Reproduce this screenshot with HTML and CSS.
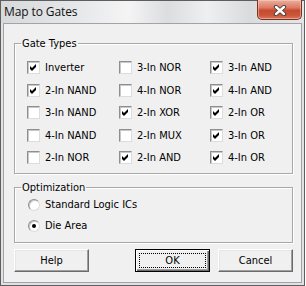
FILE: index.html
```html
<!DOCTYPE html>
<html>
<head>
<meta charset="utf-8">
<title>Map to Gates</title>
<link rel="stylesheet" href="styles.css">
</head>
<body>
<div class="window">
  <div class="titlebar">
    <span class="title">Map to Gates</span>
    <div class="close">
      <svg width="14" height="11" viewBox="0 0 14 11">
        <path d="M3 2 L11 9 M11 2 L3 9" stroke="#3c3c3c" stroke-width="4.2" stroke-linecap="round" fill="none"/>
        <path d="M3 2 L11 9 M11 2 L3 9" stroke="#fff" stroke-width="2.4" stroke-linecap="round" fill="none"/>
      </svg>
    </div>
  </div>
  <div class="client">
    <fieldset class="group">
      <legend>Gate Types</legend>
      <div class="gate-grid">
        <label class="item"><span class="box on"><svg viewBox="0 0 7 7"><path d="M0 2 L2 4 L6 0 L6 3 L2 7 L0 5 Z"/></svg></span>Inverter</label>
        <label class="item"><span class="box"></span>3-In NOR</label>
        <label class="item"><span class="box on"><svg viewBox="0 0 7 7"><path d="M0 2 L2 4 L6 0 L6 3 L2 7 L0 5 Z"/></svg></span>3-In AND</label>
        <label class="item"><span class="box on"><svg viewBox="0 0 7 7"><path d="M0 2 L2 4 L6 0 L6 3 L2 7 L0 5 Z"/></svg></span>2-In NAND</label>
        <label class="item"><span class="box"></span>4-In NOR</label>
        <label class="item"><span class="box on"><svg viewBox="0 0 7 7"><path d="M0 2 L2 4 L6 0 L6 3 L2 7 L0 5 Z"/></svg></span>4-In AND</label>
        <label class="item"><span class="box"></span>3-In NAND</label>
        <label class="item"><span class="box on"><svg viewBox="0 0 7 7"><path d="M0 2 L2 4 L6 0 L6 3 L2 7 L0 5 Z"/></svg></span>2-In XOR</label>
        <label class="item"><span class="box on"><svg viewBox="0 0 7 7"><path d="M0 2 L2 4 L6 0 L6 3 L2 7 L0 5 Z"/></svg></span>2-In OR</label>
        <label class="item"><span class="box"></span>4-In NAND</label>
        <label class="item"><span class="box"></span>2-In MUX</label>
        <label class="item"><span class="box on"><svg viewBox="0 0 7 7"><path d="M0 2 L2 4 L6 0 L6 3 L2 7 L0 5 Z"/></svg></span>3-In OR</label>
        <label class="item"><span class="box"></span>2-In NOR</label>
        <label class="item"><span class="box on"><svg viewBox="0 0 7 7"><path d="M0 2 L2 4 L6 0 L6 3 L2 7 L0 5 Z"/></svg></span>2-In AND</label>
        <label class="item"><span class="box on"><svg viewBox="0 0 7 7"><path d="M0 2 L2 4 L6 0 L6 3 L2 7 L0 5 Z"/></svg></span>4-In OR</label>
      </div>
    </fieldset>
    <fieldset class="group opt">
      <legend>Optimization</legend>
      <div class="radio-list">
        <label class="ritem"><span class="radio"></span>Standard Logic ICs</label>
        <label class="ritem"><span class="radio sel"><span class="dot"></span></span>Die Area</label>
      </div>
    </fieldset>
    <div class="buttons">
      <div class="btn">Help</div>
      <div class="btn default ok"><span class="focus">OK</span></div>
      <div class="btn cancel">Cancel</div>
    </div>
  </div>
</div>
</body>
</html>
```
FILE: styles.css
```css
html, body {
  margin: 0;
  padding: 0;
  background: #ffffff;
}

.window {
  box-sizing: border-box;
  width: 305px;
  height: 286px;
  border: 1px solid #5e5e5e;
  background: #dfe1e4;
  padding: 0 2px 2px 2px;
  display: flex;
  flex-direction: column;
  font-family: "DejaVu Sans Condensed", "Liberation Sans", sans-serif;
  font-size: 11px;
  color: #000;
}

.titlebar {
  height: 22px;
  display: flex;
  align-items: flex-start;
  margin: 0 -2px;
  padding: 0 2px 0 3px;
  background: linear-gradient(90deg, #d8d9db 0%, #e6e7e9 25%, #f4f4f5 42%, #dcdddf 55%, #eeeff0 68%, #dadbdd 82%, #e4e5e7 100%);
}

.title {
  font-family: "Open Sans", "Noto Sans", sans-serif;
  font-size: 12px;
  line-height: 22px;
  color: #111;
  letter-spacing: -0.1px;
}

.close {
  margin-left: auto;
  margin-top: -1px;
  width: 45px;
  height: 20px;
  box-sizing: border-box;
  border: 1px solid #7a3122;
  border-top: none;
  border-radius: 0 0 5px 5px;
  background: linear-gradient(180deg, #eab0a0 0%, #dd7a62 40%, #c74a30 55%, #c95539 80%, #d9775e 100%);
  box-shadow: inset 0 0 0 1px rgba(255, 220, 210, 0.45);
  display: flex;
  align-items: center;
  justify-content: center;
}

.close svg {
  display: block;
  margin-top: 1px;
}

.client {
  flex: 1;
  background: #f0f0f0;
  border: 1px solid #a3a3a3;
  display: flex;
  flex-direction: column;
}

.group {
  margin: 13px 8px 0 10px;
  padding: 0;
  border: 1px solid #a8a8a8;
  box-shadow: inset 1px 1px 0 #fff, 1px 1px 0 #fff;
  min-width: 0;
}

.group legend {
  margin-left: 6px;
  padding: 0 1px;
  line-height: 13px;
  height: 13px;
}

.gate-grid {
  display: grid;
  grid-template-columns: 92px 91px 1fr;
  grid-template-rows: 23px 22px 23px 22px 22px;
  padding: 6px 0 5px 12px;
}

.item, .ritem {
  display: flex;
  align-items: center;
  gap: 5px;
  white-space: nowrap;
}

.box {
  box-sizing: border-box;
  width: 13px;
  height: 13px;
  flex: none;
  background: #fff;
  border: 1px solid;
  border-color: #8e8e8e #dcdcdc #dcdcdc #8e8e8e;
  box-shadow: inset 1px 1px 0 #c8c8c8;
  display: flex;
  align-items: center;
  justify-content: center;
}

.box svg {
  width: 7px;
  height: 7px;
  display: block;
  fill: #000;
}

.opt {
  margin-top: 7px;
}

.radio-list {
  display: grid;
  grid-auto-rows: 21px;
  padding: 0 0 6px 13px;
}

.radio {
  box-sizing: border-box;
  width: 12px;
  height: 12px;
  flex: none;
  border-radius: 50%;
  background: #fff;
  border: 1px solid;
  border-color: #8e8e8e #dcdcdc #dcdcdc #8e8e8e;
  box-shadow: inset 1px 1px 0 #c8c8c8;
  display: flex;
  align-items: center;
  justify-content: center;
}

.dot {
  width: 4px;
  height: 4px;
  border-radius: 50%;
  background: #000;
}

.buttons {
  display: flex;
  margin: 6px 8px 0 10px;
}

.btn {
  box-sizing: border-box;
  width: 75px;
  height: 23px;
  background: #f0f0f0;
  border: 1px solid;
  border-color: #ffffff #6b6b6b #6b6b6b #ffffff;
  box-shadow: inset -1px -1px 0 #a0a0a0, inset 1px 1px 0 #e6e6e6;
  display: flex;
  align-items: center;
  justify-content: center;
  line-height: 13px;
}

.btn.ok {
  margin-left: auto;
}

.btn.cancel {
  margin-left: 8px;
}

.btn.default {
  border: 1px solid #000;
  box-shadow: inset 1px 1px 0 #fff, inset -1px -1px 0 #6b6b6b, inset -2px -2px 0 #a0a0a0;
  padding: 3px;
}

.focus {
  box-sizing: border-box;
  width: 100%;
  height: 100%;
  border: 1px dotted #000;
  display: flex;
  align-items: center;
  justify-content: center;
}
```
